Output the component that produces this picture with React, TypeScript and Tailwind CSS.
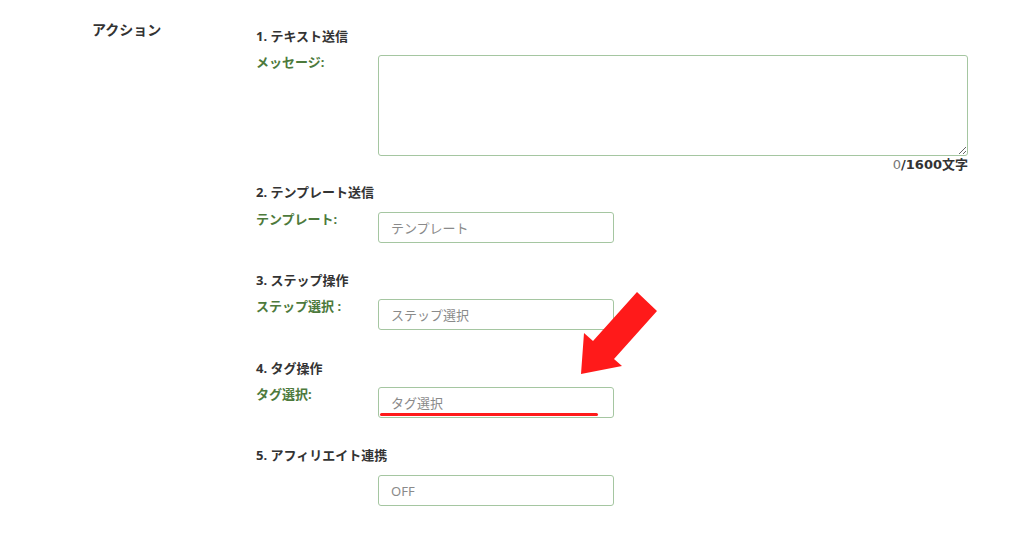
import React from "react";

const font = { fontFamily: '"Noto Sans", "Noto Sans CJK JP", sans-serif' };

function Heading({ children }: { children: React.ReactNode }) {
  return <p className="pt-[2px] text-[13px] font-bold leading-[16px] text-[#333]">{children}</p>;
}

function Label({ children }: { children?: React.ReactNode }) {
  return (
    <div className="w-[122px] shrink-0 text-[13px] font-bold leading-[15px] text-[#4d7a3c]">
      {children}
    </div>
  );
}

function Field({ placeholder, marked }: { placeholder: string; marked?: boolean }) {
  return (
    <div className="relative w-[236px]">
      <input
        type="text"
        placeholder={placeholder}
        className="h-[31px] w-full rounded-[3px] border border-[#a5c6a1] bg-white px-3 text-[13px] text-[#555] placeholder:text-[#8a8a8a] outline-none"
      />
      {marked && (
        <div className="absolute left-[2px] top-[26px] h-[3px] w-[218px] rounded-full bg-[#ff1a1a]" />
      )}
    </div>
  );
}

export default function App() {
  return (
    <div className="relative min-h-[538px] w-[1024px] bg-white" style={font}>
      <div className="flex pl-[92px] pt-[20px]">
        {/* left column */}
        <div className="w-[164px] shrink-0">
          <p className="text-[14px] font-bold leading-[20px] text-[#333]">アクション</p>
        </div>

        {/* right column */}
        <div className="flex flex-col pt-[6px]">
          {/* 1 */}
          <Heading>1. テキスト送信</Heading>
          <div className="mt-[11px] flex">
            <Label>メッセージ:</Label>
            <div className="w-[590px]">
              <textarea className="block h-[101px] w-full rounded-[3px] border border-[#a5c6a1] bg-white p-2 text-[13px] outline-none" />
              <p
                className="pt-[2px] text-right text-[13px] font-bold leading-[14px] text-[#333]"
                style={{ fontFamily: '"DejaVu Sans", "Noto Sans CJK JP", sans-serif' }}
              >
                <span className="font-normal text-[#777]">0</span>/1600文字
              </p>
            </div>
          </div>

          {/* 2 */}
          <div className="mt-[10px]">
            <Heading>2. テンプレート送信</Heading>
          </div>
          <div className="mt-[12px] flex">
            <Label>テンプレート:</Label>
            <Field placeholder="テンプレート" />
          </div>

          {/* 3 */}
          <div className="mt-[27px]">
            <Heading>3. ステップ操作</Heading>
          </div>
          <div className="mt-[11px] flex">
            <Label>ステップ選択 :</Label>
            <Field placeholder="ステップ選択" />
          </div>

          {/* 4 */}
          <div className="mt-[28px]">
            <Heading>4. タグ操作</Heading>
          </div>
          <div className="mt-[11px] flex">
            <Label>タグ選択:</Label>
            <Field placeholder="タグ選択" marked />
          </div>

          {/* 5 */}
          <div className="mt-[27px]">
            <Heading>5. アフィリエイト連携</Heading>
          </div>
          <div className="mt-[12px] flex">
            <Label />
            <Field placeholder="OFF" />
          </div>
        </div>
      </div>

      {/* annotation arrow */}
      <svg
        className="absolute left-[570px] top-[285px]"
        width="100"
        height="100"
        viewBox="0 0 100 100"
      >
        <polygon
          points="11,89 14,48 23,56 67,7 87,26 44,74 52,81"
          fill="#ff1a1a"
        />
      </svg>
    </div>
  );
}
